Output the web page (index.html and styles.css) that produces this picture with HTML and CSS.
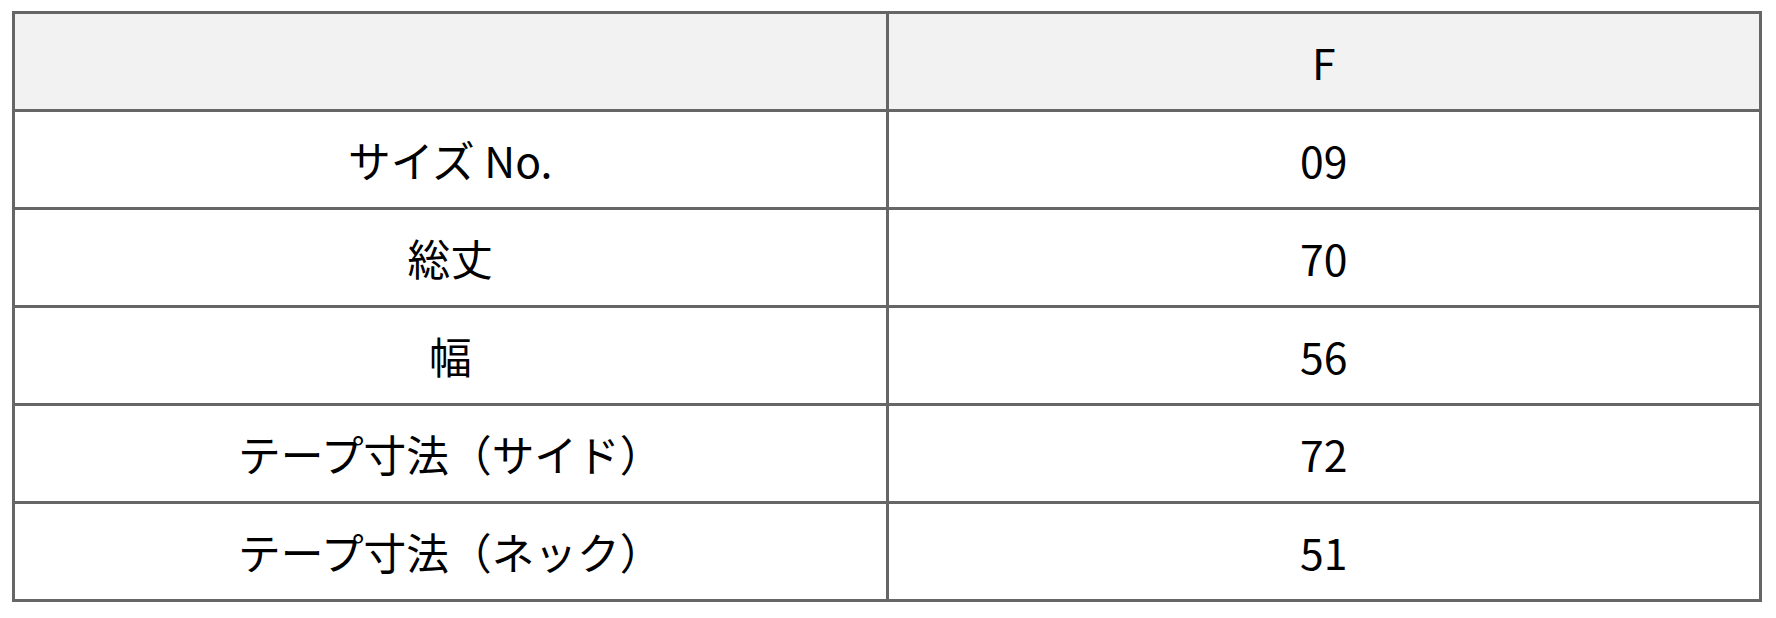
FILE: index.html
```html
<!DOCTYPE html>
<html lang="ja">
<head>
<meta charset="utf-8">
<title>サイズ表</title>
<link rel="stylesheet" href="styles.css">
</head>
<body>
<table class="size-table">
  <thead>
    <tr><th></th><th>F</th></tr>
  </thead>
  <tbody>
    <tr><td>サイズ No.</td><td>09</td></tr>
    <tr><td>総丈</td><td>70</td></tr>
    <tr><td>幅</td><td>56</td></tr>
    <tr><td>テープ寸法（サイド）</td><td>72</td></tr>
    <tr><td>テープ寸法（ネック）</td><td>51</td></tr>
  </tbody>
</table>
</body>
</html>
```
FILE: styles.css
```css
html, body {
  margin: 0;
  padding: 0;
  background: #ffffff;
}
body {
  padding: 11px 14px 0 12px;
  font-family: "Noto Sans CJK JP", "Noto Sans", sans-serif;
  color: #000000;
}
.size-table {
  width: 1750px;
  border-collapse: collapse;
  table-layout: fixed;
  border: 3px solid #666666;
}
.size-table th,
.size-table td {
  border: 3px solid #666666;
  height: 98px;
  padding: 0;
  box-sizing: border-box;
  text-align: center;
  vertical-align: middle;
  font-size: 42.7px;
  font-weight: 400;
  line-height: 1.2;
}
.size-table thead th {
  background: #f2f2f2;
}
```
